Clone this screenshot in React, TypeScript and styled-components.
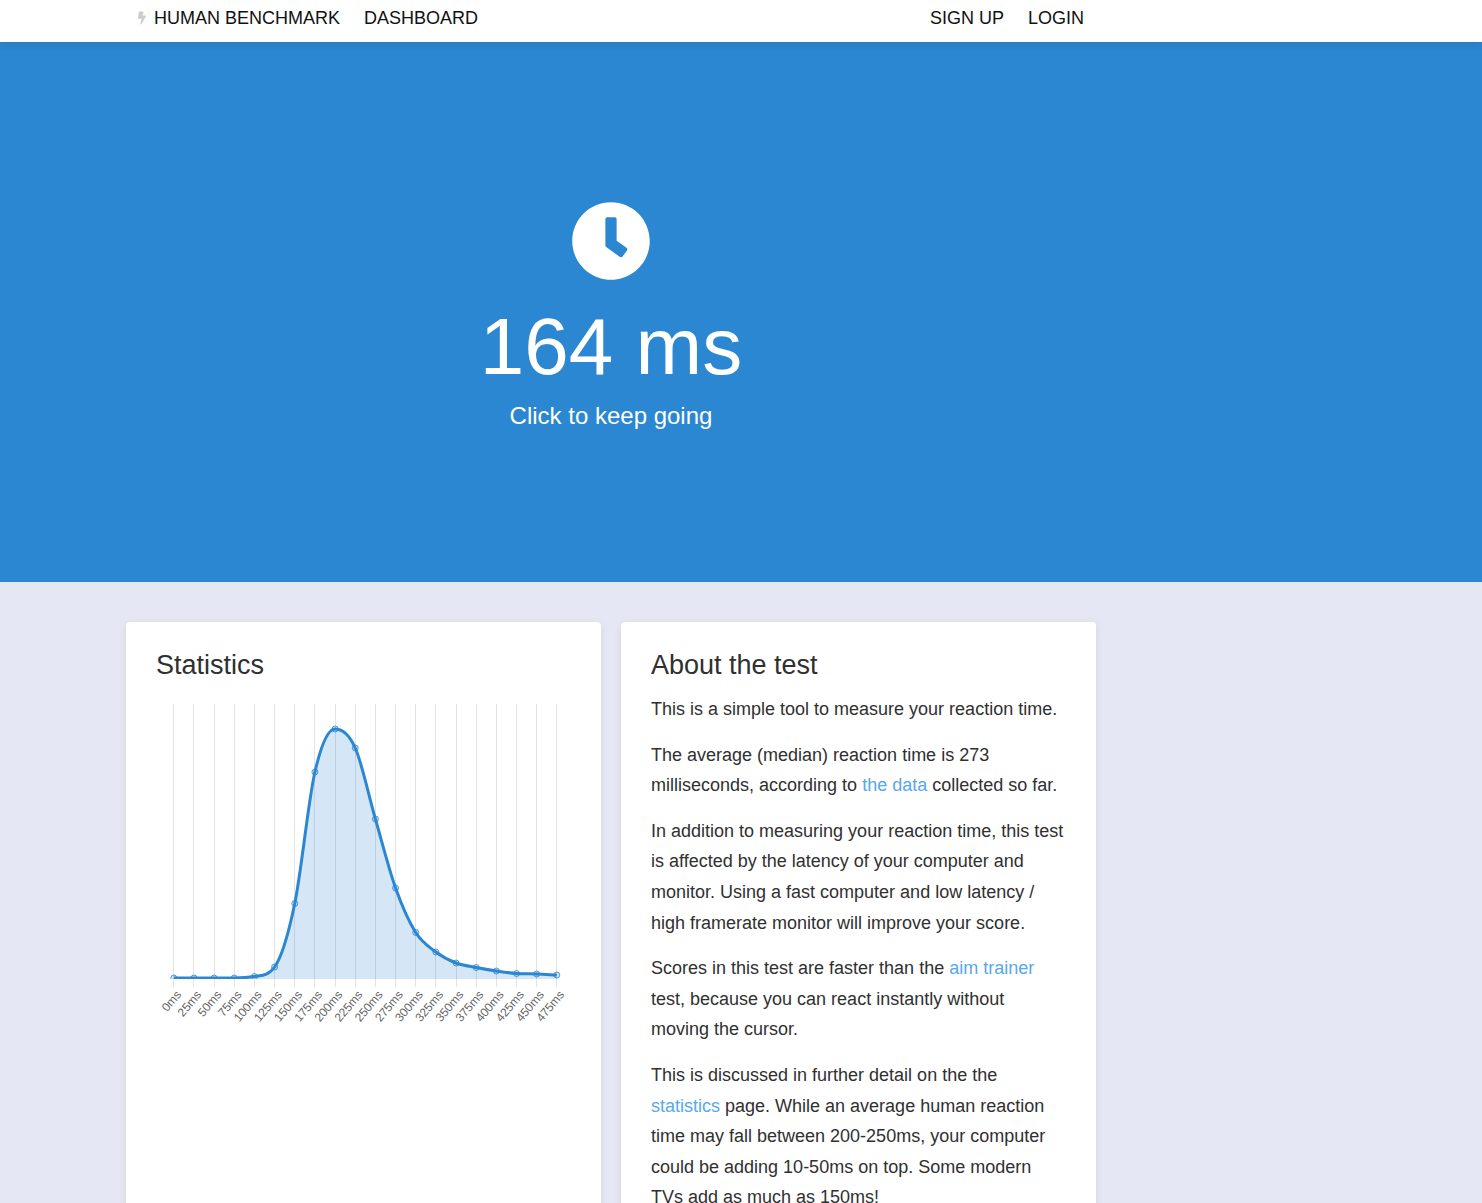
import React from "react";
import styled, { createGlobalStyle } from "styled-components";
import { FaBolt } from "react-icons/fa";

const GlobalStyle = createGlobalStyle`
  *, *::before, *::after { box-sizing: border-box; }
  body {
    margin: 0;
    background: #e5e8f4;
    color: #303030;
    font-family: "Liberation Sans", Arial, Helvetica, sans-serif;
    font-size: 18px;
    line-height: 1.7;
  }
`;

/* Every band leaves the same free rail on its right-hand side. */
const Band = styled.div`
  padding-right: 260px;
`;

const TopBar = styled(Band).attrs({ as: "header" })`
  position: relative;
  background: #fff;
  box-shadow: 0 2px 8px rgba(0, 0, 0, 0.1);
`;

const Nav = styled.nav`
  display: flex;
  justify-content: space-between;
  max-width: 970px;
  margin: 0 auto;
  padding-bottom: 6px;
`;

const NavGroup = styled.div`
  display: flex;
`;

const NavLink = styled.a`
  display: flex;
  align-items: center;
  gap: 8px;
  padding: 0 12px;
  line-height: 36px;
  color: #111;
  text-decoration: none;
  text-transform: uppercase;
`;

const BoltIcon = styled(FaBolt)`
  width: 8px;
  height: 14px;
  color: #ccc;
`;

const Hero = styled(Band).attrs({ as: "section" })`
  display: flex;
  min-height: 540px;
  background: #2b87d1;
`;

const ResultButton = styled.button`
  flex: 1;
  display: flex;
  flex-direction: column;
  align-items: center;
  justify-content: center;
  padding: 14px 0 0;
  border: 0;
  background: none;
  color: #fff;
  font: inherit;
  cursor: pointer;
`;

const ClockSvg = styled.svg`
  width: 80px;
  height: 80px;
  fill: currentColor;
`;

const Score = styled.span`
  margin-top: 20px;
  font-size: 80px;
  line-height: 92px;
`;

const Hint = styled.span`
  margin-top: 2px;
  font-size: 24px;
  line-height: 42px;
`;

const Cards = styled.div`
  display: grid;
  grid-template-columns: repeat(2, minmax(0, 1fr));
  gap: 20px;
  max-width: 970px;
  margin: 0 auto;
  padding: 40px 0;
`;

const Card = styled.section`
  padding: 26px 30px 30px;
  border-radius: 4px;
  background: #fff;
  box-shadow: 0 2px 8px rgba(0, 0, 0, 0.08);
`;

const CardTitle = styled.h2`
  margin: 0 0 12px;
  font-size: 27px;
  font-weight: 400;
  line-height: 34px;
`;

const Paragraph = styled.p`
  margin: 0 0 15px;
`;

const TextLink = styled.a`
  color: #57a8ee;
  text-decoration: none;
`;

const Chart = styled.svg`
  display: block;
  width: 100%;
  height: auto;
`;

const GridLine = styled.line`
  stroke: rgba(0, 0, 0, 0.11);
  stroke-width: 1px;
`;

const TickLabel = styled.text`
  fill: #666;
  font-size: 12px;
  text-anchor: end;
`;

const LEFT = 17.8;
const STEP = 20.16;
const TOP = 10;
const BASE = 285;

const heights = [
  1, 1, 1, 1, 2.5, 12, 75.5, 207, 250, 231, 160, 91, 46.5, 27, 16, 11.5, 8, 5.5, 5, 4,
];

type Point = { x: number; y: number; label: string };

const points: Point[] = heights.map((h, i) => ({
  x: LEFT + i * STEP,
  y: BASE - h,
  label: `${i * 25}ms`,
}));

/* Monotone cubic interpolation, so the curve never overshoots a point. */
function curvePath(pts: Point[]): string {
  const slopes = pts.slice(1).map((p, i) => (p.y - pts[i].y) / (p.x - pts[i].x));
  const tangents = pts.map((_, i) => {
    if (i === 0) return slopes[0];
    if (i === pts.length - 1) return slopes[i - 1];
    return slopes[i - 1] * slopes[i] <= 0 ? 0 : (slopes[i - 1] + slopes[i]) / 2;
  });
  slopes.forEach((s, i) => {
    if (s === 0) {
      tangents[i] = 0;
      tangents[i + 1] = 0;
      return;
    }
    const a = tangents[i] / s;
    const b = tangents[i + 1] / s;
    const m = a * a + b * b;
    if (m > 9) {
      const t = 3 / Math.sqrt(m);
      tangents[i] = a * t * s;
      tangents[i + 1] = b * t * s;
    }
  });
  let d = `M${pts[0].x},${pts[0].y}`;
  for (let i = 1; i < pts.length; i++) {
    const a = pts[i - 1];
    const b = pts[i];
    const dx = (b.x - a.x) / 3;
    d += `C${a.x + dx},${a.y + dx * tangents[i - 1]} ${b.x - dx},${b.y - dx * tangents[i]} ${b.x},${b.y}`;
  }
  return d;
}

function ReactionChart() {
  const line = curvePath(points);
  const lastX = points[points.length - 1].x;
  return (
    <Chart viewBox="0 0 415 335" role="img" aria-label="Distribution of reaction times">
      <defs>
        <clipPath id="plot">
          <rect x={LEFT - 4} y={TOP} width={lastX - LEFT + 8} height={BASE - TOP} />
        </clipPath>
      </defs>
      {points.map((p) => {
        const x = Math.floor(p.x) + 0.5;
        return <GridLine key={p.label} x1={x} x2={x} y1={TOP} y2={BASE + 8} />;
      })}
      <g clipPath="url(#plot)">
        <path d={`${line}L${lastX},${BASE}L${LEFT},${BASE}Z`} fill="#2b87d1" fillOpacity={0.2} />
        <path d={line} fill="none" stroke="#2b87d1" strokeWidth={3} />
        {points.map((p) => (
          <circle
            key={p.label}
            cx={p.x}
            cy={p.y}
            r={3}
            fill="#2b87d1"
            fillOpacity={0.2}
            stroke="#2b87d1"
            strokeOpacity={0.8}
          />
        ))}
      </g>
      {points.map((p) => (
        <TickLabel key={p.label} transform={`translate(${p.x + 8} ${BASE + 16}) rotate(-50)`}>
          {p.label}
        </TickLabel>
      ))}
    </Chart>
  );
}

function ClockIcon() {
  return (
    <ClockSvg viewBox="0 0 512 512" aria-hidden>
      <path d="M256 8C119 8 8 119 8 256s111 248 248 248 248-111 248-248S393 8 256 8zm57.1 350.1L224.9 294c-3.1-2.3-4.9-5.9-4.9-9.7V116c0-6.6 5.4-12 12-12h48c6.6 0 12 5.4 12 12v137.7l63.5 46.2c5.4 3.9 6.5 11.4 2.6 16.8l-28.2 38.8c-3.9 5.3-11.4 6.5-16.8 2.6z" />
    </ClockSvg>
  );
}

export default function App() {
  return (
    <>
      <GlobalStyle />
      <TopBar>
        <Nav>
          <NavGroup>
            <NavLink href="#home">
              <BoltIcon aria-hidden />
              Human Benchmark
            </NavLink>
            <NavLink href="#dashboard">Dashboard</NavLink>
          </NavGroup>
          <NavGroup>
            <NavLink href="#signup">Sign up</NavLink>
            <NavLink href="#login">Login</NavLink>
          </NavGroup>
        </Nav>
      </TopBar>
      <Hero>
        <ResultButton type="button">
          <ClockIcon />
          <Score>164 ms</Score>
          <Hint>Click to keep going</Hint>
        </ResultButton>
      </Hero>
      <Band as="main">
        <Cards>
          <Card>
            <CardTitle>Statistics</CardTitle>
            <ReactionChart />
          </Card>
          <Card>
            <CardTitle>About the test</CardTitle>
            <Paragraph>This is a simple tool to measure your reaction time.</Paragraph>
            <Paragraph>
              The average (median) reaction time is 273 milliseconds, according to{" "}
              <TextLink href="#data">the data</TextLink> collected so far.
            </Paragraph>
            <Paragraph>
              In addition to measuring your reaction time, this test is affected by the latency of
              your computer and monitor. Using a fast computer and low latency / high framerate
              monitor will improve your score.
            </Paragraph>
            <Paragraph>
              Scores in this test are faster than the <TextLink href="#aim">aim trainer</TextLink>{" "}
              test, because you can react instantly without moving the cursor.
            </Paragraph>
            <Paragraph>
              This is discussed in further detail on the the{" "}
              <TextLink href="#statistics">statistics</TextLink> page. While an average human
              reaction time may fall between 200-250ms, your computer could be adding 10-50ms on
              top. Some modern TVs add as much as 150ms!
            </Paragraph>
          </Card>
        </Cards>
      </Band>
    </>
  );
}
